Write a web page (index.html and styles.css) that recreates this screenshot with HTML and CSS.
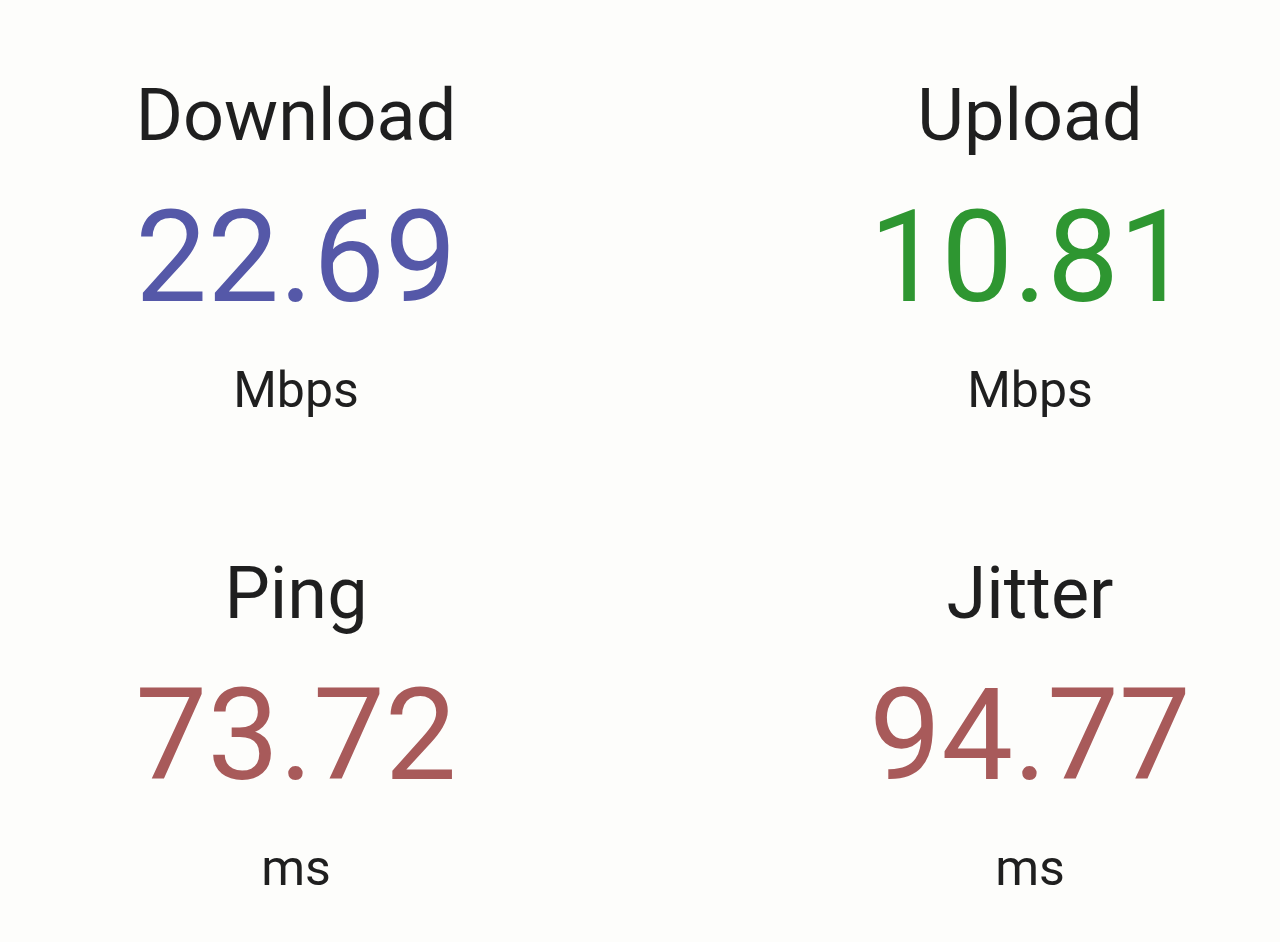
FILE: index.html
```html
<!DOCTYPE html>
<html lang="en">
<head>
  <meta charset="UTF-8">
  <meta name="viewport" content="width=device-width, initial-scale=1.0">
  <title>Speed Test Results</title>
  <link rel="stylesheet" href="styles.css">
</head>
<body>

  <div class="results">
    <div class="stat">
      <div class="stat-label">Download</div>
      <div class="stat-value download">22.69</div>
      <div class="stat-unit">Mbps</div>
    </div>

    <div class="stat">
      <div class="stat-label">Upload</div>
      <div class="stat-value upload">10.81</div>
      <div class="stat-unit">Mbps</div>
    </div>

    <div class="stat">
      <div class="stat-label">Ping</div>
      <div class="stat-value latency">73.72</div>
      <div class="stat-unit">ms</div>
    </div>

    <div class="stat">
      <div class="stat-label">Jitter</div>
      <div class="stat-value latency">94.77</div>
      <div class="stat-unit">ms</div>
    </div>
  </div>

</body>
</html>
```

FILE: styles.css
```css
body {
  background-color: #fdfdfb;
  color: #1f1f1f;
  font-family: Roboto, "Noto Sans", sans-serif;
  margin: 0;
  padding: 0;
}

.results {
  display: grid;
  grid-template-columns: 460px 460px;
  column-gap: 274px;
  row-gap: 143px;
  padding: 80px 0 0 66px;
}

.stat {
  display: flex;
  flex-direction: column;
  align-items: center;
  text-align: center;
}

.stat-label {
  font-size: 72px;
  line-height: 1;
}

.stat-value {
  font-size: 128px;
  line-height: 1;
  margin-top: 41px;
}

.stat-unit {
  font-size: 50px;
  line-height: 1;
  margin-top: 44px;
}

.download {
  color: #5558a8;
}

.upload {
  color: #2e9631;
}

.latency {
  color: #a85a5a;
}
```
